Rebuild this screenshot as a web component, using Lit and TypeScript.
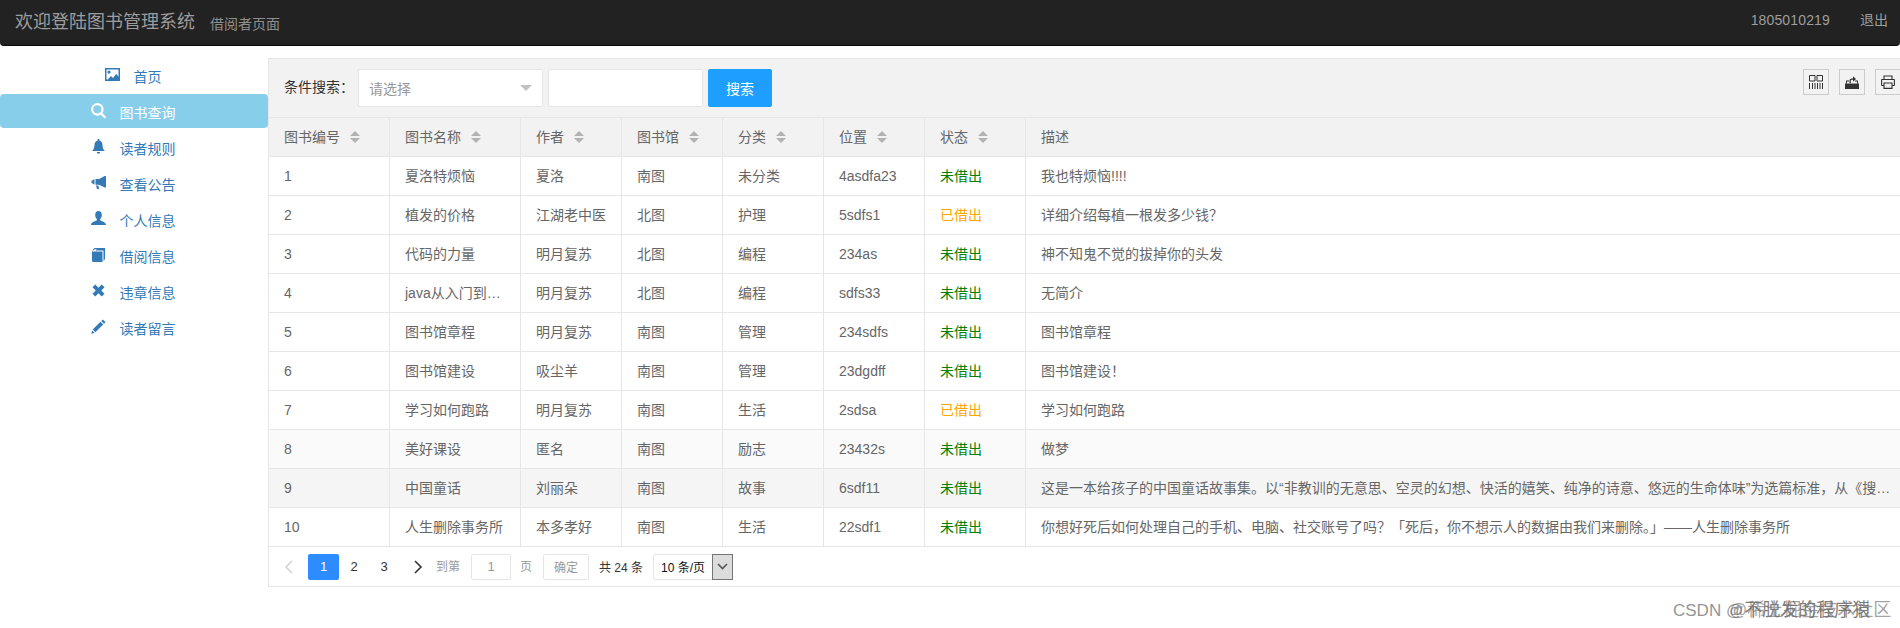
import { LitElement, html, css, svg, unsafeCSS } from "lit";
import { customElement } from "lit/decorators.js";

const STACK = unsafeCSS(`"Liberation Sans", "Noto Sans CJK SC", sans-serif`);

const NAV = [
  { key: "picture", label: "首页" },
  { key: "search", label: "图书查询", active: true },
  { key: "bell", label: "读者规则" },
  { key: "bullhorn", label: "查看公告" },
  { key: "user", label: "个人信息" },
  { key: "book", label: "借阅信息" },
  { key: "remove", label: "违章信息" },
  { key: "pencil", label: "读者留言" },
];

const ICONS: Record<string, unknown> = {
  picture: svg`<path fill-rule="evenodd" d="M0 1h15v13H0zM1.500 2.500v10h1.200l3.300-3.600 2 2 3.200-4.200 2.300 3V2.500zM4 3.500a1.600 1.600 0 1 1 0 3.200 1.600 1.600 0 0 1 0-3.200z"/>`,
  search: svg`<path fill-rule="evenodd" d="M6.300 0a6.300 6.300 0 0 1 5 10.100l3.900 3.900-1.600 1.600-3.900-3.900A6.300 6.300 0 1 1 6.300 0zm0 2.200a4.100 4.100 0 1 0 0 8.200 4.100 4.100 0 0 0 0-8.200z"/>`,
  bell: svg`<path d="M7.500 0c.6 0 1 .4 1 1v.7c2.100.5 3 2.200 3 4.300 0 3 .9 4.600 2.500 6H1C2.600 10.600 3.500 9 3.500 6c0-2.100.9-3.800 3-4.300V1c0-.6.4-1 1-1zM5.800 13h3.400a1.700 1.700 0 0 1-3.400 0z"/>`,
  bullhorn: svg`<path d="M15 1v11.500h-1.300L8 9.700H4.500V4h3.600l5.600-3zM3.500 4.500v4.800H2.400L1.500 8.300H.5V5.600h1l.9-1.100zM5 10.500h2.300l1 3.500H6z"/>`,
  user: svg`<path d="M7.500 0c2.100 0 3.300 1.700 3.300 3.900 0 1.700-.7 3.300-1.600 4.100v1.200c0 .7 5.800 1.200 5.800 4.800H0c0-3.600 5.800-4.100 5.800-4.800V8C4.900 7.200 4.200 5.600 4.200 3.900 4.200 1.700 5.400 0 7.500 0z"/>`,
  book: svg`<path d="M1 3.500 3.500 1H14v11l-1.500 2V3.500H4.500L5.800 2.300H4L2 3.500zM1 4.500h10.500V15H2.500A1.500 1.500 0 0 1 1 13.500z"/>`,
  remove: svg`<path d="M4.300 1.500 7.500 4.700l3.200-3.200 2.800 2.800-3.200 3.200 3.200 3.200-2.800 2.800-3.200-3.200-3.200 3.200-2.800-2.800 3.200-3.200-3.200-3.200z"/>`,
  pencil: svg`<path d="M11.800.5 14.500 3.200 13 4.700 10.300 2zM9.500 2.800l2.700 2.700-7.800 7.800-2.700-2.700zM1.100 11.400l2.500 2.500-3.300.9z"/>`,
};

const COLS = ["图书编号", "图书名称", "作者", "图书馆", "分类", "位置", "状态", "描述"];
const COL_WIDTHS = [121, 131, 101, 101, 101, 101, 101];

const ROWS = [
  ["1", "夏洛特烦恼", "夏洛", "南图", "未分类", "4asdfa23", "未借出", "我也特烦恼!!!!"],
  ["2", "植发的价格", "江湖老中医", "北图", "护理", "5sdfs1", "已借出", "详细介绍每植一根发多少钱\uFF1F"],
  ["3", "代码的力量", "明月复苏", "北图", "编程", "234as", "未借出", "神不知鬼不觉的拔掉你的头发"],
  ["4", "java从入门到放弃", "明月复苏", "北图", "编程", "sdfs33", "未借出", "无简介"],
  ["5", "图书馆章程", "明月复苏", "南图", "管理", "234sdfs", "未借出", "图书馆章程"],
  ["6", "图书馆建设", "吸尘羊", "南图", "管理", "23dgdff", "未借出", "图书馆建设\uFF01"],
  ["7", "学习如何跑路", "明月复苏", "南图", "生活", "2sdsa", "已借出", "学习如何跑路"],
  ["8", "美好课设", "匿名", "南图", "励志", "23432s", "未借出", "做梦"],
  ["9", "中国童话", "刘丽朵", "南图", "故事", "6sdf11", "未借出", "这是一本给孩子的中国童话故事集。以“非教训的无意思、空灵的幻想、快活的嬉笑、纯净的诗意、悠远的生命体味”为选篇标准\uFF0C从《搜神记》《太平广记》等古籍中精选而成。"],
  ["10", "人生删除事务所", "本多孝好", "南图", "生活", "22sdf1", "未借出", "你想好死后如何处理自己的手机、电脑、社交账号了吗\uFF1F「死后\uFF0C你不想示人的数据由我们来删除。」——人生删除事务所"],
];

@customElement("app-root")
export class AppRoot extends LitElement {
  static styles = css`
    :host {
      display: block;
      width: 1900px;
      height: 628px;
      overflow: hidden;
      position: relative;
      background: #fff;
      font-family: ${STACK};
    }
    .topbar {
      height: 46px;
      box-sizing: border-box;
      background: #222;
      border-bottom: 1px solid #080808;
      border-radius: 0 0 4px 4px;
      display: flex;
      align-items: center;
      padding: 0 12px 0 15px;
      color: #9d9d9d;
      font-size: 14px;
    }
    .title { font-size: 18px; line-height: 20px; margin-top: -2px; }
    .subtitle { margin-left: 15px; line-height: 20px; margin-top: 2px; color: #8f8f8f; font-size: 14px; }
    .user { margin-left: auto; line-height: 20px; margin-bottom: 6px; letter-spacing: 0.15px; }
    .logout { margin-left: 30px; line-height: 20px; margin-bottom: 6px; }
    .main { display: flex; align-items: flex-start; padding-top: 12px; }
    .side { width: 268px; flex: none; margin-top: -1px; display: flex; flex-direction: column; }
    .nav-item {
      height: 34px;
      margin: 1px 0;
      padding-right: 2px;
      display: flex;
      align-items: center;
      justify-content: center;
      gap: 14px;
      color: #337ab7;
      font-size: 14px;
      line-height: 20px;
      border-radius: 4px;
    }
    .nav-item.active { background: #87ceeb; color: #fff; }
    .nav-item svg { width: 15px; height: 16px; fill: currentColor; flex: none; }
    .nav-item span { margin-top: 3px; }
    .panel {
      width: 1638px;
      flex: none;
      box-sizing: border-box;
      border: 1px solid #e6e6e6;
      border-right: 0;
      color: #666;
      font-size: 14px;
    }
    .toolbar {
      height: 59px;
      box-sizing: border-box;
      border-bottom: 1px solid #e6e6e6;
      background: #f2f2f2;
      display: flex;
      align-items: center;
      padding: 0 5px 0 15px;
    }
    .label { width: 74px; color: #333; line-height: 20px; margin-top: -2px; }
    .select, .input {
      height: 38px;
      box-sizing: border-box;
      background: #fff;
      border: 1px solid #e6e6e6;
      border-radius: 2px;
      display: flex;
      align-items: center;
    }
    .select { width: 185px; padding: 0 10px; color: #999; justify-content: space-between; }
    .caret { width: 0; height: 0; border: 6px solid transparent; border-top-color: #c2c2c2; border-bottom: 0; }
    .input { width: 155px; margin-left: 5px; }
    .btn {
      margin-left: 5px;
      width: 64px;
      height: 38px;
      background: #1e9fff;
      color: #fff;
      border-radius: 2px;
      display: flex;
      align-items: center;
      justify-content: center;
    }
    .tools { margin-left: auto; display: flex; gap: 10px; margin-top: -12px; }
    .tool {
      width: 26px;
      height: 26px;
      box-sizing: border-box;
      border: 1px solid #ccc;
      display: flex;
      align-items: center;
      justify-content: center;
      color: #333;
    }
    .tool svg { width: 14px; height: 14px; }
    table { width: 100%; table-layout: fixed; border-collapse: separate; border-spacing: 0; }
    th, td {
      height: 39px;
      box-sizing: border-box;
      padding: 0 15px;
      border-right: 1px solid #e6e6e6;
      border-bottom: 1px solid #e6e6e6;
      font-weight: 400;
      text-align: left;
      white-space: nowrap;
      overflow: hidden;
      text-overflow: ellipsis;
      line-height: 20px;
    }
    th:last-child, td:last-child { border-right: 0; }
    th { background: #f2f2f2; }
    .head { display: flex; align-items: center; gap: 10px; }
    .sort { display: flex; flex-direction: column; gap: 2px; flex: none; }
    .up, .down { width: 0; height: 0; border-left: 5px solid transparent; border-right: 5px solid transparent; }
    .up { border-bottom: 5px solid #b2b2b2; }
    .down { border-top: 5px solid #b2b2b2; }
    tr.soft td { background: #fafafa; }
    tr.hover td { background: #f5f5f5; }
    .free { color: #008000; }
    .out { color: #ffa500; }
    .pager {
      height: 39px;
      display: flex;
      align-items: center;
      font-size: 12px;
      padding-left: 15px;
      color: #999;
    }
    .chev { width: 10px; height: 14px; fill: none; stroke-width: 1.6; flex: none; }
    .chev.off { stroke: #d2d2d2; }
    .chev.on { stroke: #333; }
    .page { width: 30px; height: 26px; display: flex; align-items: center; justify-content: center; color: #333; font-size: 13px; }
    .page.cur { width: 31px; background: #2d8cff; color: #fff; border-radius: 2px; }
    .pages { display: flex; margin: 0 14px 0 14px; }
    .goto { line-height: 16px; }
    .goto.first { margin-left: 13px; }
    .skip {
      width: 40px;
      height: 26px;
      box-sizing: border-box;
      margin: 0 9px 0 11px;
      border: 1px solid #e6e6e6;
      border-radius: 2px;
      display: flex;
      align-items: center;
      justify-content: center;
      font-size: 13px;
    }
    .ok {
      width: 46px;
      height: 26px;
      box-sizing: border-box;
      margin-left: 11px;
      border: 1px solid #e6e6e6;
      border-radius: 2px;
      display: flex;
      align-items: center;
      justify-content: center;
    }
    .count { margin-left: 10px; color: #333; width: 54px; }
    .limit {
      width: 80px;
      height: 26px;
      box-sizing: border-box;
      border: 1px solid #e6e6e6;
      border-radius: 2px;
      display: flex;
      align-items: center;
      color: #111;
      padding-left: 7px;
    }
    .limit span { flex: 1; }
    .limit-arrow {
      width: 21px;
      height: 26px;
      margin: -1px -1px -1px 0;
      box-sizing: border-box;
      background: #dcdcdc;
      border: 1px solid #767676;
      display: flex;
      align-items: center;
      justify-content: center;
    }
    .limit-arrow svg { width: 11px; height: 7px; fill: none; stroke: #555; stroke-width: 1.6; }
    .mark {
      position: absolute;
      left: 1673px;
      top: 598px;
      width: 227px;
      height: 24px;
      font-size: 17px;
      line-height: 24px;
      white-space: nowrap;
      color: rgba(120, 120, 120, 0.8);
    }
    .mark b { font-weight: 400; font-size: 18px; margin-left: 1px; color: rgba(90, 90, 90, 0.8); }
    .mark .over { position: absolute; left: 56px; top: 0; color: rgba(110, 110, 110, 0.65); font-size: 18px; }
  `;

  private sortIcon() {
    return html`<span class="sort"><i class="up"></i><i class="down"></i></span>`;
  }

  render() {
    return html`
      <header class="topbar">
        <span class="title">欢迎登陆图书管理系统</span>
        <span class="subtitle">借阅者页面</span>
        <span class="user">1805010219</span>
        <span class="logout">退出</span>
      </header>
      <div class="main">
        <nav class="side">
          ${NAV.map(
            (n) => html`<div class="nav-item ${n.active ? "active" : ""}">
              <svg viewBox="0 0 15 16">${ICONS[n.key]}</svg><span>${n.label}</span>
            </div>`
          )}
        </nav>
        <section class="panel">
          <div class="toolbar">
            <span class="label">条件搜索\uFF1A</span>
            <div class="select"><span>请选择</span><i class="caret"></i></div>
            <div class="input"></div>
            <div class="btn">搜索</div>
            <div class="tools">
              <div class="tool">
                <svg viewBox="0 0 14 14" fill="none" stroke="currentColor" stroke-width="1">
                  <path d="M.5.5h5.500v5.500H.5zM8 .5h5.500v5.500H8zM.5 8v6M3.500 8v6M6 8v6M8.500 8v6M11 8v6M13.500 8v6"/>
                </svg>
              </div>
              <div class="tool">
                <svg viewBox="0 0 14 14" fill="currentColor">
                  <path d="M0 8.500h14V14H0z"/>
                  <path d="M1 5.500h3v1H2v2H1zM10 5.500h3v3h-1v-2h-2z"/>
                  <path d="M4.500 8V5.500c0-1.300 1-2 2.300-2H8V1.300L11 4 8 6.700V4.700H7c-.8 0-1.200.3-1.200 1.100V8z"/>
                </svg>
              </div>
              <div class="tool">
                <svg viewBox="0 0 14 14" fill="none" stroke="currentColor" stroke-width="1.100">
                  <path d="M3 4.500V1h8v3.500M3 10.500H1A.5.500 0 0 1 .6 10V5a.5.500 0 0 1 .4-.5h12a.5.500 0 0 1 .4.500v5a.5.500 0 0 1-.4.500h-2M3 8h8v5.400H3z"/>
                </svg>
              </div>
            </div>
          </div>
          <table>
            <colgroup>
              ${COL_WIDTHS.map((w) => html`<col style="width:${w}px" />`)}
              <col />
            </colgroup>
            <thead>
              <tr>
                ${COLS.map(
                  (c, i) => html`<th><div class="head"><span>${c}</span>${i < 7 ? this.sortIcon() : ""}</div></th>`
                )}
              </tr>
            </thead>
            <tbody>
              ${ROWS.map(
                (r, i) => html`<tr class="${i === 7 ? "soft" : i === 8 ? "hover" : ""}">
                  ${r.map((v, j) =>
                    j === 6
                      ? html`<td class="${v === "已借出" ? "out" : "free"}">${v}</td>`
                      : html`<td>${v}</td>`
                  )}
                </tr>`
              )}
            </tbody>
          </table>
          <div class="pager">
            <svg class="chev off" viewBox="0 0 10 14"><path d="M8 1 2 7l6 6"/></svg>
            <div class="pages">
              <span class="page cur">1</span><span class="page">2</span><span class="page">3</span>
            </div>
            <svg class="chev on" viewBox="0 0 10 14"><path d="m2 1 6 6-6 6"/></svg>
            <span class="goto first">到第</span>
            <span class="skip">1</span>
            <span class="goto">页</span>
            <span class="ok">确定</span>
            <span class="count">共 24 条</span>
            <div class="limit">
              <span>10 条/页</span>
              <i class="limit-arrow"><svg viewBox="0 0 11 7"><path d="m1 1 4.500 4.500L10 1"/></svg></i>
            </div>
          </div>
        </section>
      </div>
      <div class="mark">CSDN @<b>不脱发的程序猿</b><span class="over">@稀土掘金技术社区</span></div>
    `;
  }
}
